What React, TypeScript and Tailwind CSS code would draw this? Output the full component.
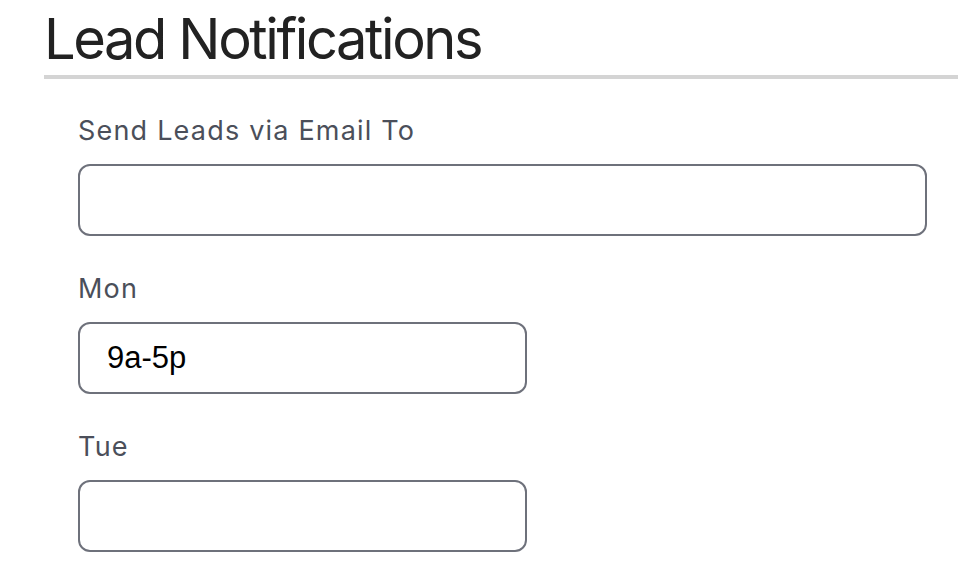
import { useState } from 'react';

const days = [
  { day: 'Mon', value: '9a-5p' },
  { day: 'Tue', value: '' },
];

function Field({
  label,
  value,
  onChange,
  wide,
}: {
  label: string;
  value: string;
  onChange: (v: string) => void;
  wide?: boolean;
}) {
  return (
    <div className="mb-[33px]">
      <label className="block mb-[13px] text-[27px] leading-[40px] tracking-[1.2px] text-[#4b4f5a] font-['Inter',sans-serif]">
        {label}
      </label>
      <input
        type="text"
        value={value}
        onChange={(e) => onChange(e.target.value)}
        className={
          'block h-[72px] rounded-[12px] border-2 border-[#6e717b] bg-white pl-[27px] pr-4 text-[31px] text-black outline-none font-["Liberation_Sans",Arial,sans-serif] ' +
          (wide ? 'w-full' : 'w-[449px]')
        }
      />
    </div>
  );
}

export default function App() {
  const [email, setEmail] = useState('');
  const [hours, setHours] = useState<Record<string, string>>(
    Object.fromEntries(days.map((d) => [d.day, d.value]))
  );

  return (
    <div className="w-[958px] h-[570px] overflow-hidden bg-white pl-[44px]">
      <h1 className="pt-[11px] text-[56px] leading-[56px] font-normal text-[#222222] tracking-[-2.4px] font-['Inter',sans-serif]">
        Lead Notifications
      </h1>
      <div className="mt-[8px] h-[4px] bg-[#d4d4d4]" />

      <form className="pl-[34px] pr-[31px] pt-[32px]" onSubmit={(e) => e.preventDefault()}>
        <Field label="Send Leads via Email To" value={email} onChange={setEmail} wide />
        {days.map((d) => (
          <Field
            key={d.day}
            label={d.day}
            value={hours[d.day] ?? ''}
            onChange={(v) => setHours((h) => ({ ...h, [d.day]: v }))}
          />
        ))}
      </form>
    </div>
  );
}
